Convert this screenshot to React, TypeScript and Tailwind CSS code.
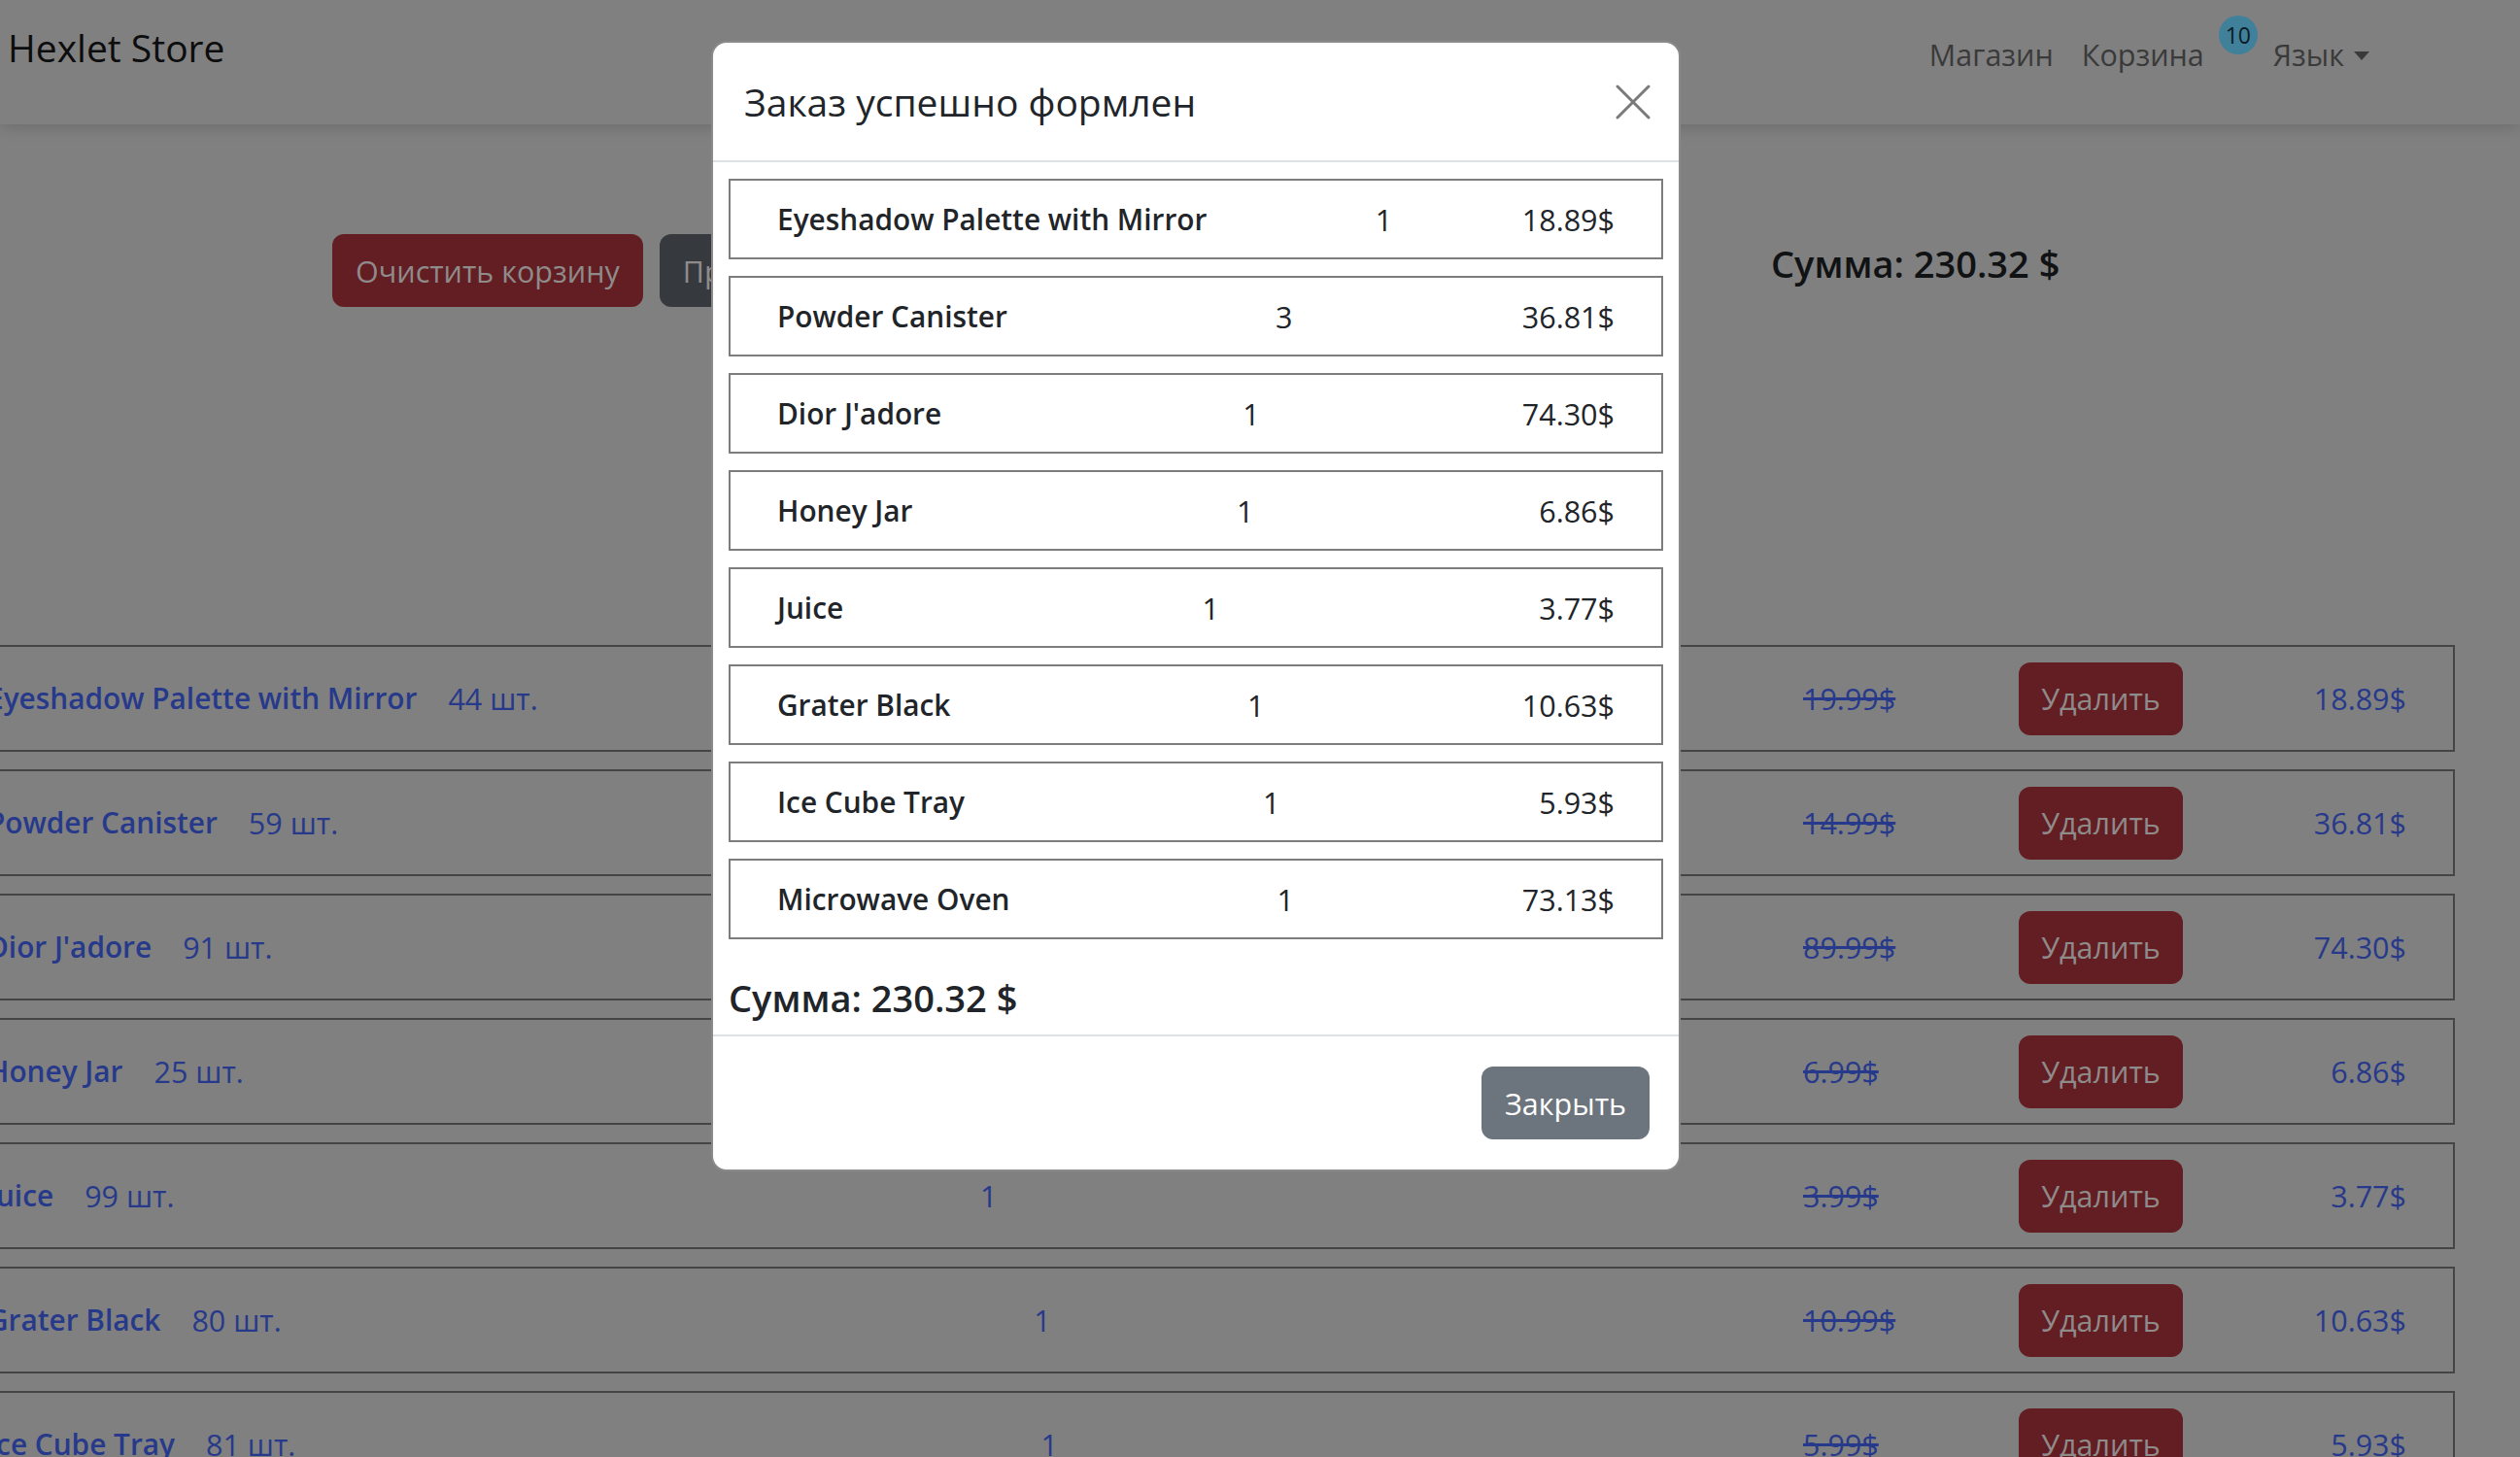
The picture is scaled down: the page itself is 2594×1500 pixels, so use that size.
import React from "react";

type CartItem = {
  name: string;
  stock: number;
  qty: number;
  oldPrice: string;
  price: string;
};

const CART: CartItem[] = [
  { name: "Eyeshadow Palette with Mirror", stock: 44, qty: 1, oldPrice: "19.99$", price: "18.89$" },
  { name: "Powder Canister", stock: 59, qty: 3, oldPrice: "14.99$", price: "36.81$" },
  { name: "Dior J'adore", stock: 91, qty: 1, oldPrice: "89.99$", price: "74.30$" },
  { name: "Honey Jar", stock: 25, qty: 1, oldPrice: "6.99$", price: "6.86$" },
  { name: "Juice", stock: 99, qty: 1, oldPrice: "3.99$", price: "3.77$" },
  { name: "Grater Black", stock: 80, qty: 1, oldPrice: "10.99$", price: "10.63$" },
  { name: "Ice Cube Tray", stock: 81, qty: 1, oldPrice: "5.99$", price: "5.93$" },
  { name: "Microwave Oven", stock: 67, qty: 1, oldPrice: "76.99$", price: "73.13$" },
];

function Navbar() {
  return (
    <header className="relative z-10 flex h-[128px] items-start bg-[#808080] shadow-[0_4px_14px_rgba(0,0,0,0.14)]">
      <a className="ml-[8px] mt-[25px] text-[39px] leading-[48px] text-[#0d0d0d]">Hexlet Store</a>
      <nav className="ml-auto mr-[139px] flex items-start text-[30.5px] leading-[48px] text-[#3a3a3a]">
        <a className="mt-[32px] px-[14px]">Магазин</a>
        <a className="mt-[32px] px-[15px]">Корзина</a>
        <span className="mt-[16px] flex h-[40px] w-[40px] items-center justify-center rounded-full bg-[#41809a] text-[23px] leading-none text-[#0b1b24]">
          10
        </span>
        <a className="mt-[32px] flex items-center px-[16px]">
          Язык
          <span className="ml-[10px] mt-[3px] inline-block h-0 w-0 border-x-[8px] border-t-[9px] border-x-transparent border-t-[#3a3a3a]" />
        </a>
      </nav>
    </header>
  );
}

function CartRow({ item }: { item: CartItem }) {
  return (
    <div className="ml-[-63px] flex h-[110px] w-[2590px] items-center justify-between border-2 border-[#454545] px-[48px] text-[30.5px] leading-[48px] text-[#27398a]">
      <div className="flex items-center whitespace-nowrap">
        <a className="text-[29.8px] font-semibold">{item.name}</a>
        <span className="ml-[32px]">{item.stock} шт.</span>
      </div>
      <span>{item.qty}</span>
      <div className="flex w-[621px] items-center">
        <span className="w-[222px] line-through">{item.oldPrice}</span>
        <button className="h-[75px] w-[169px] rounded-[12px] bg-[#621e22] text-[#8f8b8b]">Удалить</button>
        <span className="flex-1 text-right">{item.price}</span>
      </div>
    </div>
  );
}

function OrderModal() {
  return (
    <div className="absolute left-[732px] top-[42px] z-20 w-[998px] rounded-[16px] border-2 border-[#8a8a8a] bg-white text-[#212529]">
      <div className="flex h-[123px] items-center justify-between border-b-2 border-[#dee2e6] pl-[32px] pr-[27px]">
        <h5 className="text-[39px] leading-[48px]">Заказ успешно формлен</h5>
        <button className="flex h-[40px] w-[40px] items-center justify-center">
          <svg width="36" height="36" viewBox="0 0 36 36" fill="none" stroke="#7a7a7a" strokeWidth="3" strokeLinecap="round">
            <path d="M2 2 34 34M34 2 2 34" />
          </svg>
        </button>
      </div>
      <div className="px-[16px] pb-[14px] pt-[17px]">
        <div className="flex flex-col gap-[17px]">
          {CART.map((item) => (
            <div
              key={item.name}
              className="flex h-[83px] items-center justify-between border-2 border-[#7d7d7d] px-[48px] text-[30.5px] leading-[48px]"
            >
              <span className="text-[29.8px] font-semibold">{item.name}</span>
              <span className="pl-[40px]">{item.qty}</span>
              <span>{item.price}</span>
            </div>
          ))}
        </div>
        <h5 className="mt-[36px] text-[38px] font-semibold leading-[48px]">Сумма: 230.32 $</h5>
      </div>
      <div className="flex justify-end border-t-2 border-[#dee2e6] px-[30px] py-[31px]">
        <button className="h-[75px] rounded-[12px] bg-[#6c757d] px-[24px] text-[30.5px] leading-[48px] text-white">
          Закрыть
        </button>
      </div>
    </div>
  );
}

export default function App() {
  return (
    <div className="relative h-screen overflow-hidden bg-[#808080] font-['Open_Sans',sans-serif]">
      <Navbar />
      <main>
        <section className="flex items-center pl-[342px] pt-[113px]">
          <div className="flex w-[1481px] gap-[17px] text-[30.5px] leading-[48px]">
            <button className="h-[75px] rounded-[12px] bg-[#621e22] px-[24px] text-[#8f8b8b]">Очистить корзину</button>
            <button className="h-[75px] rounded-[12px] bg-[#363a3e] px-[24px] text-[#8f8b8b]">Продолжить покупки</button>
          </div>
          <h5 className="mb-[16px] text-[38px] font-semibold leading-[48px] text-[#111214]">Сумма: 230.32 $</h5>
        </section>
        <div className="mt-[348px] flex flex-col gap-[18px]">
          {CART.map((item) => (
            <CartRow key={item.name} item={item} />
          ))}
        </div>
      </main>
      <OrderModal />
    </div>
  );
}
